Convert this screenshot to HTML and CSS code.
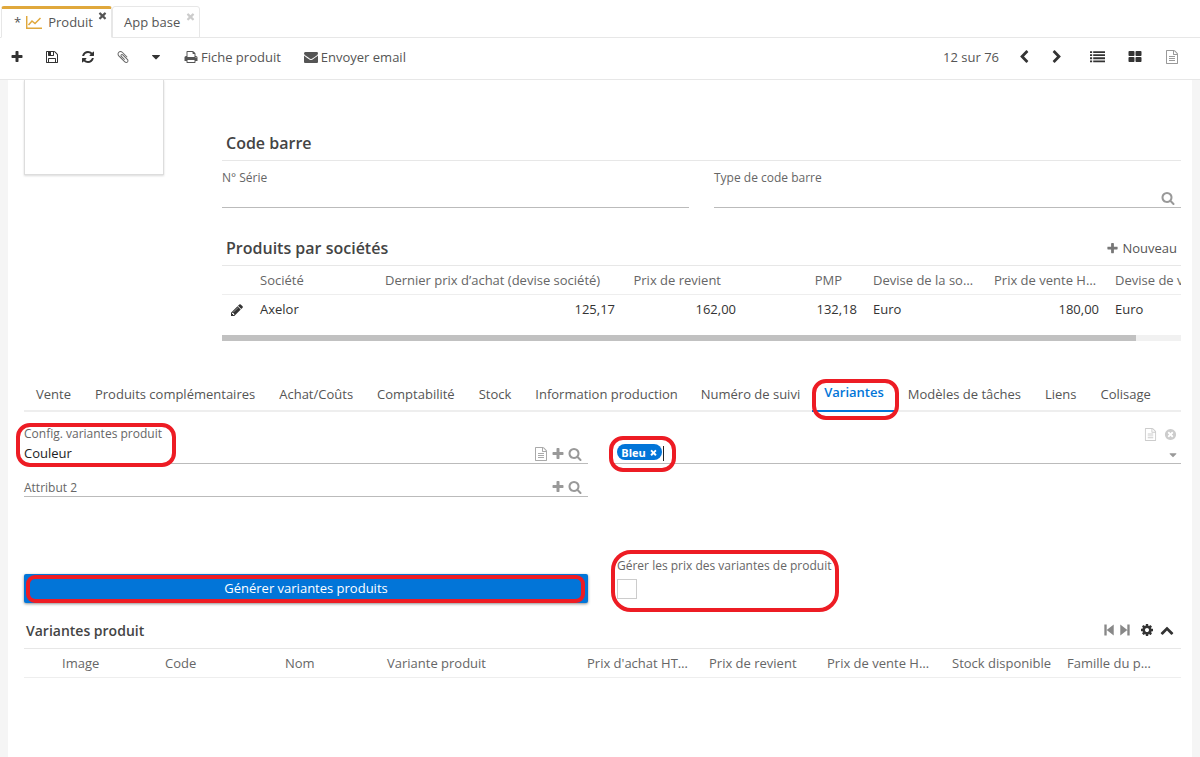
FILE: index.html
```html
<!DOCTYPE html>
<html lang="fr">
<head>
    <meta charset="UTF-8">
    <meta name="viewport" content="width=device-width, initial-scale=1.0">
    <title>Produit</title>
    <link rel="stylesheet" href="styles.css">
</head>
<body>
    <svg class="icon-defs" xmlns="http://www.w3.org/2000/svg">
        <symbol id="i-plus" viewBox="0 0 1792 1792"><path d="M1600 736v192q0 40-28 68t-68 28h-416v416q0 40-28 68t-68 28h-192q-40 0-68-28t-28-68v-416h-416q-40 0-68-28t-28-68v-192q0-40 28-68t68-28h416v-416q0-40 28-68t68-28h192q40 0 68 28t28 68v416h416q40 0 68 28t28 68z"/></symbol>
        <symbol id="i-search" viewBox="0 0 1792 1792"><path d="M1216 832q0-185-131.500-316.500t-316.500-131.500-316.500 131.500-131.500 316.500 131.500 316.500 316.500 131.500 316.500-131.500 131.500-316.500zm512 832q0 52-38 90t-90 38q-54 0-90-38l-343-342q-179 124-399 124-143 0-273.500-55.500t-225-150-150-225-55.500-273.500 55.500-273.500 150-225 225-150 273.500-55.500 273.500 55.500 225 150 150 225 55.500 273.500q0 220-124 399l343 343q37 37 37 90z"/></symbol>
        <symbol id="i-left" viewBox="0 0 1792 1792"><path d="M1427 301l-531 531 531 531q19 19 19 45t-19 45l-166 166q-19 19-45 19t-45-19l-742-742q-19-19-19-45t19-45l742-742q19-19 45-19t45 19l166 166q19 19 19 45t-19 45z"/></symbol>
        <symbol id="i-right" viewBox="0 0 1792 1792"><path d="M1363 877l-742 742q-19 19-45 19t-45-19l-166-166q-19-19-19-45t19-45l531-531-531-531q-19-19-19-45t19-45l166-166q19-19 45-19t45 19l742 742q19 19 19 45t-19 45z"/></symbol>
        <symbol id="i-up" viewBox="0 0 1792 1792"><path d="M1683 1331l-166 165q-19 19-45 19t-45-19l-531-531-531 531q-19 19-45 19t-45-19l-166-165q-19-19-19-45.500t19-45.500l742-741q19-19 45-19t45 19l742 741q19 19 19 45.500t-19 45.500z"/></symbol>
        <symbol id="i-mail" viewBox="0 0 1792 1792"><path d="M1792 710v794q0 66-47 113t-113 47h-1472q-66 0-113-47t-47-113v-794q44 49 101 87 362 246 497 345 57 42 92.500 65.500t94.500 48 110 24.500h2q51 0 110-24.500t94.500-48 92.500-65.500q170-123 498-345 57-39 100-87zm0-294q0 79-49 151t-122 123q-376 261-468 325-10 7-42.500 30.500t-54 38-52 32.500-57.500 27-50 9h-2q-23 0-50-9t-57.500-27-52-32.500-54-38-42.500-30.500q-91-64-262-182.500t-205-142.500q-62-42-117-115.500t-55-136.500q0-78 41.500-130t118.500-52h1472q65 0 112.500 47t47.500 113z"/></symbol>
        <symbol id="i-caret" viewBox="0 0 1792 1792"><path d="M1408 704q0 26-19 45l-448 448q-19 19-45 19t-45-19l-448-448q-19-19-19-45t19-45 45-19h896q26 0 45 19t19 45z"/></symbol>
        <symbol id="i-grid" viewBox="0 0 1792 1792"><path d="M832 1024v384q0 52-38 90t-90 38h-512q-52 0-90-38t-38-90v-384q0-52 38-90t90-38h512q52 0 90 38t38 90zm0-768v384q0 52-38 90t-90 38h-512q-52 0-90-38t-38-90v-384q0-52 38-90t90-38h512q52 0 90 38t38 90zm896 768v384q0 52-38 90t-90 38h-512q-52 0-90-38t-38-90v-384q0-52 38-90t90-38h512q52 0 90 38t38 90zm0-768v384q0 52-38 90t-90 38h-512q-52 0-90-38t-38-90v-384q0-52 38-90t90-38h512q52 0 90 38t38 90z"/></symbol>
        <symbol id="i-list" viewBox="0 0 1792 1792"><path d="M0 256h256v224H0zM384 256h1408v224H384zM0 624h256v224H0zM384 624h1408v224H384zM0 992h256v224H0zM384 992h1408v224H384zM0 1360h256v224H0zM384 1360h1408v224H384z"/></symbol>
        <symbol id="i-refresh" viewBox="0 0 1792 1792"><path d="M1639 1056q0 5-1 7-64 268-268 434.500t-478 166.500q-146 0-282.500-55t-243.500-157l-129 129q-19 19-45 19t-45-19-19-45v-448q0-26 19-45t45-19h448q26 0 45 19t19 45-19 45l-137 137q71 66 161 102t187 36q134 0 250-65t186-179q11-17 53-117 8-23 30-23h192q13 0 22.500 9.500t9.500 22.500zm25-800v448q0 26-19 45t-45 19h-448q-26 0-45-19t-19-45 19-45l138-138q-148-137-349-137-134 0-250 65t-186 179q-11 17-53 117-8 23-30 23h-199q-13 0-22.500-9.500t-9.500-22.500v-7q65-268 270-434.500t480-166.500q146 0 284 55.500t245 156.500l130-129q19-19 45-19t45 19 19 45z"/></symbol>
        <symbol id="i-save" viewBox="0 0 1792 1792"><path d="M512 1536h768v-384h-768v384zm896 0h128v-896q0-14-10-38.500t-20-34.500l-281-281q-10-10-34-20t-39-10v416q0 40-28 68t-68 28h-576q-40 0-68-28t-28-68v-416h-128v1280h128v-416q0-40 28-68t68-28h832q40 0 68 28t28 68v416zm-384-928v-320q0-13-9.500-22.500t-22.500-9.500h-192q-13 0-22.500 9.500t-9.500 22.500v320q0 13 9.500 22.500t22.500 9.500h192q13 0 22.500-9.500t9.500-22.500zm640 32v928q0 40-28 68t-68 28h-1344q-40 0-68-28t-28-68v-1344q0-40 28-68t68-28h928q40 0 88 20t76 48l280 280q28 28 48 76t20 88z"/></symbol>
        <symbol id="i-print" viewBox="0 0 1792 1792"><path d="M448 1536h896v-256h-896v256zm0-640h896v-384h-160q-40 0-68-28t-28-68v-160h-640v640zm1152 64q0-26-19-45t-45-19-45 19-19 45 19 45 45 19 45-19 19-45zm128 0v416q0 13-9.500 22.500t-22.500 9.500h-224v160q0 40-28 68t-68 28h-960q-40 0-68-28t-28-68v-160h-224q-13 0-22.500-9.500t-9.500-22.500v-416q0-79 56.500-135.500t135.500-56.500h64v-544q0-40 28-68t68-28h672q40 0 88 20t76 48l152 152q28 28 48 76t20 88v256h64q79 0 135.500 56.500t56.500 135.500z"/></symbol>
        <symbol id="i-file" viewBox="0 0 1792 1792"><path d="M1596 380q28 28 48 76t20 88v1152q0 40-28 68t-68 28h-1344q-40 0-68-28t-28-68v-1600q0-40 28-68t68-28h896q40 0 88 20t76 48zm-444-244v376h376q-10-29-22-41l-313-313q-12-12-41-22zm384 1528v-1024h-416q-40 0-68-28t-28-68v-416h-768v1536h1280zm-1024-864q0-14 9-23t23-9h704q14 0 23 9t9 23v64q0 14-9 23t-23 9h-704q-14 0-23-9t-9-23v-64zm736 224q14 0 23 9t9 23v64q0 14-9 23t-23 9h-704q-14 0-23-9t-9-23v-64q0-14 9-23t23-9h704zm0 256q14 0 23 9t9 23v64q0 14-9 23t-23 9h-704q-14 0-23-9t-9-23v-64q0-14 9-23t23-9h704z"/></symbol>
        <symbol id="i-clip" viewBox="0 0 1792 1792"><path d="M1596 1385q0 117-79 196t-196 79q-135 0-235-100l-777-776q-113-115-113-271 0-159 110-270t269-111q158 0 273 113l605 606q10 10 10 22 0 16-30.500 46.500t-46.500 30.500q-13 0-23-10l-606-607q-79-77-181-77-106 0-179 75t-73 181q0 105 76 181l776 777q63 63 145 63 64 0 106-42t42-106q0-82-63-145l-581-581q-26-24-60-24-29 0-48 19t-19 48q0 32 25 59l410 410q10 10 10 22 0 16-31 47t-47 31q-12 0-22-10l-410-410q-63-61-63-149 0-82 57-139t139-57q88 0 149 63l581 581q100 98 100 235z"/></symbol>
        <symbol id="i-pencil" viewBox="0 0 1792 1792"><path d="M491 1536l91-91-235-235-91 91v107h128v128h107zm523-928q0-22-22-22-10 0-17 7l-542 542q-7 7-7 17 0 22 22 22 10 0 17-7l542-542q7-7 7-17zm-54-192l416 416-832 832h-416v-416zm683 96q0 53-37 90l-166 166-416-416 166-165q36-38 90-38 53 0 91 38l235 234q37 39 37 91z"/></symbol>
        <symbol id="i-cog" viewBox="0 0 1792 1792"><path d="M1152 896q0-106-75-181t-181-75-181 75-75 181 75 181 181 75 181-75 75-181zm512-109v222q0 12-8 23t-20 13l-185 28q-19 54-39 91 35 50 107 138 10 12 10 25t-9 23q-27 37-99 108t-94 71q-12 0-26-9l-138-108q-44 23-91 38-16 136-29 186-7 28-36 28h-222q-14 0-24.500-8.500t-11.500-21.500l-28-184q-49-16-90-37l-141 107q-10 9-25 9-14 0-25-11-126-114-165-168-7-10-7-23 0-12 8-23 15-21 51-66.500t54-70.500q-27-50-41-99l-183-27q-13-2-21-12.500t-8-23.500v-222q0-12 8-23t19-13l186-28q14-46 39-92-40-57-107-138-10-12-10-24 0-10 9-23 26-36 98.500-107.500t94.500-71.500q13 0 26 10l138 107q44-23 91-38 16-136 29-186 7-28 36-28h222q14 0 24.500 8.500t11.500 21.500l28 184q49 16 90 37l142-107q9-9 24-9 13 0 25 10 129 119 165 170 7 8 7 22 0 12-8 23-15 21-51 66.500t-54 70.500q26 50 41 98l183 28q13 2 21 12.500t8 23.500z"/></symbol>
        <symbol id="i-close" viewBox="0 0 1792 1792"><path d="M1490 1322q0 40-28 68l-136 136q-28 28-68 28t-68-28l-294-294-294 294q-28 28-68 28t-68-28l-136-136q-28-28-28-68t28-68l294-294-294-294q-28-28-28-68t28-68l136-136q28-28 68-28t68 28l294 294 294-294q28-28 68-28t68 28l136 136q28 28 28 68t-28 68l-294 294 294 294q28 28 28 68z"/></symbol>
        <symbol id="i-close-circle" viewBox="0 0 1792 1792"><path d="M1277 1122q0-26-19-45l-181-181 181-181q19-19 19-45 0-27-19-46l-90-90q-19-19-46-19-26 0-45 19l-181 181-181-181q-19-19-45-19-27 0-46 19l-90 90q-19 19-19 46 0 26 19 45l181 181-181 181q-19 19-19 45 0 27 19 46l90 90q19 19 46 19 26 0 45-19l181-181 181 181q19 19 45 19 27 0 46-19l90-90q19-19 19-46zm387-226q0 209-103 385.500t-279.500 279.500-385.500 103-385.500-103-279.500-279.500-103-385.500 103-385.500 279.500-279.500 385.500-103 385.500 103 279.500 279.500 103 385.500z"/></symbol>
        <symbol id="i-first" viewBox="0 0 1792 1792"><path d="M300 200h300v1392H300zM600 896L1500 200v1392z"/></symbol>
        <symbol id="i-last" viewBox="0 0 1792 1792"><path d="M1192 200h300v1392h-300zM1192 896L292 200v1392z"/></symbol>
    </svg>

    <div class="page">
        <div class="tabs">
            <div class="tab tab-active">
                <span class="tab-star">*</span>
                <svg class="tab-chart" viewBox="0 0 16 14"><path d="M.7 1v12.200H16M2.500 10l3.500-4 3 2.500L14.500 3" fill="none" stroke="currentColor" stroke-width="1.500"/></svg>
                <span>Produit</span>
                <svg class="ic tab-x"><use href="#i-close"/></svg>
            </div>
            <div class="tab">
                <span>App base</span>
                <svg class="ic tab-x tab-x-off"><use href="#i-close"/></svg>
            </div>
        </div>

        <div class="toolbar">
            <svg class="ic tool tool-plus"><use href="#i-plus"/></svg>
            <svg class="ic tool tool-save"><use href="#i-save"/></svg>
            <svg class="ic tool tool-refresh"><use href="#i-refresh"/></svg>
            <svg class="ic tool tool-clip"><use href="#i-clip"/></svg>
            <svg class="ic tool tool-caret"><use href="#i-caret"/></svg>
            <div class="tool-text tool-print"><svg class="ic"><use href="#i-print"/></svg>Fiche produit</div>
            <div class="tool-text tool-mail"><svg class="ic"><use href="#i-mail"/></svg>Envoyer email</div>
            <div class="pager">12 sur 76</div>
            <svg class="ic tool tool-prev"><use href="#i-left"/></svg>
            <svg class="ic tool tool-next"><use href="#i-right"/></svg>
            <svg class="ic tool tool-list"><use href="#i-list"/></svg>
            <svg class="ic tool tool-grid"><use href="#i-grid"/></svg>
            <svg class="ic tool tool-file"><use href="#i-file"/></svg>
        </div>

        <div class="sheet">
            <div class="top-row">
                <div class="image-box"></div>
                <div class="top-main">
                    <div class="section-title">Code barre</div>
                    <div class="barcode-row">
                        <div class="field field-barcode">
                            <div class="field-label">N° Série</div>
                        </div>
                        <div class="field field-barcode">
                            <div class="field-label">Type de code barre</div>
                            <svg class="ic field-search"><use href="#i-search"/></svg>
                        </div>
                    </div>
                    <div class="section-title section-title-companies">
                        <span>Produits par sociétés</span>
                        <span class="new-link"><svg class="ic"><use href="#i-plus"/></svg>Nouveau</span>
                    </div>
                    <div class="table-wrap">
                        <div class="grid-row grid-head companies-cols">
                            <div></div>
                            <div>Société</div>
                            <div class="num">Dernier prix d’achat (devise société)</div>
                            <div class="num">Prix de revient</div>
                            <div class="num">PMP</div>
                            <div>Devise de la so…</div>
                            <div class="num">Prix de vente H…</div>
                            <div>Devise de v</div>
                        </div>
                        <div class="grid-row grid-body companies-cols">
                            <div class="pencil-cell"><svg class="ic"><use href="#i-pencil"/></svg></div>
                            <div>Axelor</div>
                            <div class="num-val">125,17</div>
                            <div class="num-val">162,00</div>
                            <div class="num-val">132,18</div>
                            <div>Euro</div>
                            <div class="num-val">180,00</div>
                            <div>Euro</div>
                        </div>
                    </div>
                    <div class="scrollbar"><div class="scrollbar-thumb"></div></div>
                </div>
            </div>

            <div class="nav">
                <div class="nav-item">Vente</div>
                <div class="nav-item">Produits complémentaires</div>
                <div class="nav-item">Achat/Coûts</div>
                <div class="nav-item">Comptabilité</div>
                <div class="nav-item">Stock</div>
                <div class="nav-item">Information production</div>
                <div class="nav-item nav-suivi">Numéro de suivi</div>
                <div class="nav-item nav-active">Variantes</div>
                <div class="nav-item">Modèles de tâches</div>
                <div class="nav-item">Liens</div>
                <div class="nav-item">Colisage</div>
            </div>

            <div class="variant-form">
                <div class="variant-col">
                    <div class="field field-config">
                        <div class="field-label">Config. variantes produit</div>
                        <div class="field-value">Couleur</div>
                        <div class="field-icons">
                            <svg class="ic ic-file"><use href="#i-file"/></svg>
                            <svg class="ic"><use href="#i-plus"/></svg>
                            <svg class="ic"><use href="#i-search"/></svg>
                        </div>
                    </div>
                    <div class="field field-attr">
                        <div class="field-label">Attribut 2</div>
                        <div class="field-icons">
                            <svg class="ic"><use href="#i-plus"/></svg>
                            <svg class="ic"><use href="#i-search"/></svg>
                        </div>
                    </div>
                </div>
                <div class="variant-col">
                    <div class="value-actions">
                        <svg class="ic ic-file"><use href="#i-file"/></svg>
                        <svg class="ic"><use href="#i-close-circle"/></svg>
                    </div>
                    <div class="tag-field">
                        <span class="chip">Bleu<svg class="ic"><use href="#i-close"/></svg></span>
                        <span class="text-cursor"></span>
                        <svg class="ic tag-caret"><use href="#i-caret"/></svg>
                    </div>
                </div>
            </div>

            <div class="action-row">
                <div class="action-left">
                    <div class="primary-btn">Générer variantes produits</div>
                </div>
                <div class="action-right">
                    <div class="field-label">Gérer les prix des variantes de produit</div>
                    <div class="checkbox"></div>
                </div>
            </div>

            <div class="panel-title">
                <span>Variantes produit</span>
                <div class="panel-tools">
                    <svg class="ic ic-muted"><use href="#i-first"/></svg>
                    <svg class="ic ic-muted"><use href="#i-last"/></svg>
                    <svg class="ic panel-cog"><use href="#i-cog"/></svg>
                    <svg class="ic"><use href="#i-up"/></svg>
                </div>
            </div>
            <div class="grid-row grid-head variants-cols">
                <div></div>
                <div>Image</div>
                <div>Code</div>
                <div>Nom</div>
                <div>Variante produit</div>
                <div>Prix d'achat HT…</div>
                <div>Prix de revient</div>
                <div>Prix de vente H…</div>
                <div>Stock disponible</div>
                <div>Famille du p…</div>
            </div>
        </div>

        <!-- annotations rouges -->
        <div class="ring ring-tab"></div>
        <div class="ring ring-config"></div>
        <div class="ring ring-chip"></div>
        <div class="ring ring-btn"></div>
        <div class="ring ring-check"></div>
    </div>
</body>
</html>
```

FILE: styles.css
```css
* {
    box-sizing: border-box;
}

html,
body {
    margin: 0;
    height: 100%;
    overflow: hidden;
}

body {
    font-family: 'Open Sans', sans-serif;
    font-size: 13px;
    color: #333;
    background: #fff;
}

.icon-defs {
    display: none;
}

.ic {
    display: inline-block;
    width: 14px;
    height: 14px;
    fill: currentColor;
    flex: none;
}

.page {
    position: relative;
    width: 1200px;
    height: 757px;
    display: flex;
    flex-direction: column;
    overflow: hidden;
}

/* onglets */
.tabs {
    height: 38px;
    display: flex;
    align-items: flex-end;
    padding-left: 1px;
    border-bottom: 1px solid #e7e7e7;
}

.tab {
    position: relative;
    height: 32px;
    padding: 0 16px 0 11px;
    margin-bottom: -1px;
    display: flex;
    align-items: center;
    gap: 4px;
    color: #555;
    background: #fff;
    border: 1px solid #e7e7e7;
    border-radius: 3px 3px 0 0;
}

.tab-active {
    width: 111px;
    padding-left: 12px;
    padding-bottom: 2px;
    border-top: 3px solid #e0a83c;
    border-bottom-color: #fff;
}

.tab + .tab {
    width: 88px;
    padding-left: 11px;
}

.tab-star {
    color: #555;
}

.tab-chart {
    width: 16px;
    height: 14px;
    margin: 0 2px 0 1px;
    color: #e0a83c;
}

.tab-x {
    position: absolute;
    right: 3px;
    top: 1px;
    width: 11px;
    height: 11px;
    color: #555;
}

.tab-x-off {
    top: 4px;
    color: #ccc;
}

.toolbar {
    height: 42px;
    display: flex;
    align-items: center;
    padding-bottom: 4px;
    border-bottom: 1px solid #e7e7e7;
    color: #333;
}

.tool-plus {
    margin-left: 10px;
}

.tool-save {
    margin-left: 21px;
}

.tool-refresh {
    margin-left: 22px;
}

.tool-clip {
    margin-left: 21px;
    color: #666;
}

.tool-caret {
    margin-left: 19px;
}

.tool-text {
    display: flex;
    align-items: center;
    gap: 3px;
    color: #555;
}

.tool-print {
    margin-left: 21px;
}

.tool-mail {
    margin-left: 23px;
}

.pager {
    margin-left: auto;
    color: #555;
}

.tool-prev {
    margin-left: 18px;
}

.tool-next {
    margin-left: 19px;
}

.tool-list {
    margin-left: 26px;
    width: 15px;
    height: 15px;
}

.tool-grid {
    margin-left: 23px;
}

.tool-file {
    margin-left: 23px;
    margin-right: 21px;
    color: #999;
}

/* feuille */
.sheet {
    flex: 1;
    margin: 0 8px;
    padding: 0 11px 0 16px;
    background: #fff;
    box-shadow: 0 0 0 8px #f5f5f5;
    clip-path: inset(0 -8px);
}

.top-row {
    display: flex;
}

.image-box {
    width: 140px;
    height: 95px;
    flex: none;
    background: #fff;
    border: 1px solid #ddd;
    border-top: none;
    box-shadow: 0 1px 2px rgba(0, 0, 0, 0.15);
}

.top-main {
    width: 959px;
    margin-left: 58px;
    padding-top: 46px;
}

.section-title {
    height: 35px;
    line-height: 34px;
    padding-left: 4px;
    font-size: 16px;
    font-weight: 600;
    color: #444;
    border-bottom: 1px solid #e7e7e7;
}

.section-title-companies {
    margin-top: 23px;
    display: flex;
    justify-content: space-between;
}

.new-link {
    display: flex;
    align-items: center;
    gap: 3px;
    padding-right: 4px;
    font-size: 13px;
    font-weight: 400;
    color: #555;
}

.new-link .ic {
    width: 13px;
    height: 13px;
    color: #777;
}

.barcode-row {
    display: grid;
    grid-template-columns: 467px 467px;
    column-gap: 25px;
}

.field {
    position: relative;
    border-bottom: 1px solid #bbb;
}

.field-barcode {
    height: 47px;
    padding-top: 8px;
}

.field-label {
    font-size: 12px;
    line-height: 17px;
    color: #666;
}

.field-search {
    position: absolute;
    right: 6px;
    bottom: 2px;
    color: #999;
}

.table-wrap {
    overflow: hidden;
}

.grid-row {
    display: grid;
}

.grid-row > div {
    padding: 0 8px;
    white-space: nowrap;
    overflow: hidden;
}

.grid-head {
    height: 29px;
    line-height: 28px;
    color: #666;
    border-bottom: 1px solid #eee;
}

.grid-body {
    height: 40px;
    line-height: 29px;
    color: #333;
}

.companies-cols {
    grid-template-columns: 30px 125px 246px 121px 121px 121px 121px 121px;
    width: 1033px;
}

.grid-row > .num {
    text-align: right;
    padding-right: 23px;
}

.grid-row > .num-val {
    text-align: right;
}

.pencil-cell {
    display: flex;
    align-items: center;
    height: 29px;
    color: #333;
}

.scrollbar {
    height: 6px;
    background: #f1f1f1;
}

.scrollbar-thumb {
    width: 914px;
    height: 6px;
    background: #c1c1c1;
}

/* navigation */
.nav {
    height: 34px;
    margin-top: 37px;
    display: flex;
    border-bottom: 2px solid #eee;
}

.nav-item {
    padding: 0 12px;
    line-height: 32px;
    color: #555;
    white-space: nowrap;
}

.nav-suivi {
    margin-left: -1px;
}

.nav-active {
    height: 34px;
    line-height: 29px;
    font-weight: 600;
    color: #0275d8;
    border-bottom: 2px solid #0275d8;
}

/* formulaire variantes */
.variant-form {
    display: grid;
    grid-template-columns: 564px 569px;
    column-gap: 24px;
}

.field-config {
    height: 39px;
    margin-top: 13px;
}

.field-value {
    margin-top: 2px;
    line-height: 19px;
    color: #222;
}

.field-icons {
    position: absolute;
    right: 6px;
    bottom: 2px;
    display: flex;
    gap: 3px;
    color: #999;
}

.field-icons .ic-file {
    color: #aaa;
}

.field-attr {
    height: 33px;
    padding-top: 15px;
}

.value-actions {
    height: 36px;
    padding: 16px 4px 0 0;
    display: flex;
    justify-content: flex-end;
    gap: 7px;
    color: #ccc;
}

.value-actions .ic {
    width: 13px;
    height: 13px;
}

.tag-field {
    position: relative;
    height: 16px;
    display: flex;
    align-items: flex-end;
    border-bottom: 1px solid #bbb;
}

.chip {
    position: relative;
    top: -3px;
    margin-left: 5px;
    height: 16px;
    width: 45px;
    display: inline-flex;
    align-items: center;
    justify-content: center;
    gap: 3px;
    font-size: 11px;
    font-weight: 700;
    color: #fff;
    background: #0275d8;
    border-radius: 8px;
}

.chip .ic {
    width: 9px;
    height: 9px;
}

.text-cursor {
    position: relative;
    top: -2px;
    width: 1px;
    height: 15px;
    margin-left: 1px;
    background: #222;
}

.tag-caret {
    position: absolute;
    right: 2px;
    bottom: 2px;
    width: 12px;
    height: 12px;
    color: #999;
}

.action-row {
    height: 115px;
    display: grid;
    grid-template-columns: 564px 569px;
    column-gap: 24px;
}

.action-left {
    padding-top: 77px;
}

.primary-btn {
    height: 29px;
    line-height: 28px;
    text-align: center;
    color: #fff;
    background: #0275d8;
    border-radius: 2px;
    box-shadow: 0 1px 3px rgba(0, 0, 0, 0.45);
}

.action-right {
    padding: 60px 0 0 5px;
}

.checkbox {
    width: 20px;
    height: 20px;
    margin-top: 5px;
    border: 1px solid #ccc;
}

.panel-title {
    height: 37px;
    display: flex;
    align-items: center;
    justify-content: space-between;
    padding: 0 7px 0 2px;
    font-size: 14px;
    font-weight: 600;
    color: #444;
    border-bottom: 1px solid #e7e7e7;
}

.panel-tools {
    display: flex;
    align-items: center;
    gap: 2px;
    color: #333;
}

.panel-tools .ic-muted {
    color: #888;
}

.panel-tools .panel-cog {
    margin: 0 4px 0 6px;
}

.variants-cols {
    grid-template-columns: 30px 103px 120px 102px 200px 122px 118px 125px 115px 122px;
}

/* cercles d'annotation */
.ring {
    position: absolute;
    border: 4px solid #ed1c24;
    border-radius: 14px;
}

.ring-tab {
    left: 812px;
    top: 379px;
    width: 87px;
    height: 41px;
}

.ring-config {
    left: 16px;
    top: 423px;
    width: 160px;
    height: 44px;
}

.ring-chip {
    left: 609px;
    top: 436px;
    width: 67px;
    height: 36px;
}

.ring-btn {
    left: 26px;
    top: 575px;
    width: 559px;
    height: 28px;
    border-radius: 9px;
}

.ring-check {
    left: 611px;
    top: 550px;
    width: 228px;
    height: 62px;
    border-radius: 20px;
}
```
